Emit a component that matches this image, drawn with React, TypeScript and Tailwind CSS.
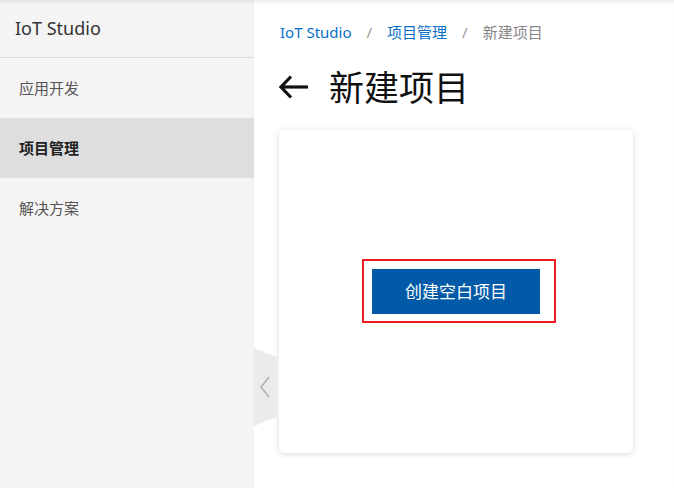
import React from "react";

export default function App() {
  const font = { fontFamily: '"Noto Sans", "Noto Sans CJK SC", sans-serif' };
  return (
    <div
      className="relative flex h-[488px] w-[674px] overflow-hidden bg-white shadow-[inset_0_5px_4px_-3px_rgba(0,0,0,0.08)]"
      style={font}
    >
      <aside className="flex w-[254px] shrink-0 flex-col bg-[#f4f4f4] shadow-[inset_0_5px_4px_-3px_rgba(0,0,0,0.08)]">
        <div className="flex h-[58px] items-center border-b border-[#dcdcdc] pl-[15px] text-[18px] text-[#333]">
          IoT Studio
        </div>
        <div className="flex h-[60px] items-center pl-[19px] text-[15px] text-[#555]">应用开发</div>
        <div className="flex h-[60px] items-center bg-[#dedede] pl-[19px] text-[15px] font-bold text-[#222]">
          项目管理
        </div>
        <div className="flex h-[60px] items-center pl-[19px] text-[15px] text-[#555]">解决方案</div>
      </aside>

      <div className="absolute left-[254px] top-[348px] flex h-[78px] w-[23px] items-center justify-center bg-[#ebebeb] [clip-path:polygon(0_0,100%_12%,100%_88%,0_100%)]">
        <svg width="12" height="22" viewBox="0 0 12 22" fill="none" className="-ml-[2px]">
          <path d="M10 1 L2 11 L10 21" stroke="#aaa" strokeWidth="1.3" />
        </svg>
      </div>

      <main className="flex flex-1 flex-col pl-[25px]">
        <div className="flex h-[66px] items-center gap-[15px] pl-[1px] pb-[1px] text-[15px]">
          <span className="text-[#0a6fc9]">IoT Studio</span>
          <span className="text-[#999]">/</span>
          <span className="text-[#0a6fc9]">项目管理</span>
          <span className="text-[#999]">/</span>
          <span className="text-[#888]">新建项目</span>
        </div>
        <div className="flex h-[44px] items-center gap-[19px] -mt-[1px]">
          <svg width="32" height="26" viewBox="0 0 32 26" fill="none" className="ml-[-1px]">
            <path d="M30 13 H4" stroke="#111" strokeWidth="3.2" />
            <path d="M13 2.5 L3 13 L13 23.5" stroke="#111" strokeWidth="3.2" strokeLinejoin="miter" />
          </svg>
          <span className="text-[35px] leading-none text-[#111]">新建项目</span>
        </div>
        <div className="mt-[21px] flex h-[323px] w-[354px] items-center justify-center rounded-[5px] bg-white shadow-[0_1px_6px_rgba(0,0,0,0.15)]">
          <div className="relative">
            <button className="flex h-[45px] w-[168px] items-center justify-center bg-[#005aa7] text-[17px] text-white">
              创建空白项目
            </button>
            <div className="pointer-events-none absolute -left-[10px] -top-[10px] h-[64px] w-[194px] border-2 border-[#ee1c25]" />
          </div>
        </div>
      </main>
    </div>
  );
}
